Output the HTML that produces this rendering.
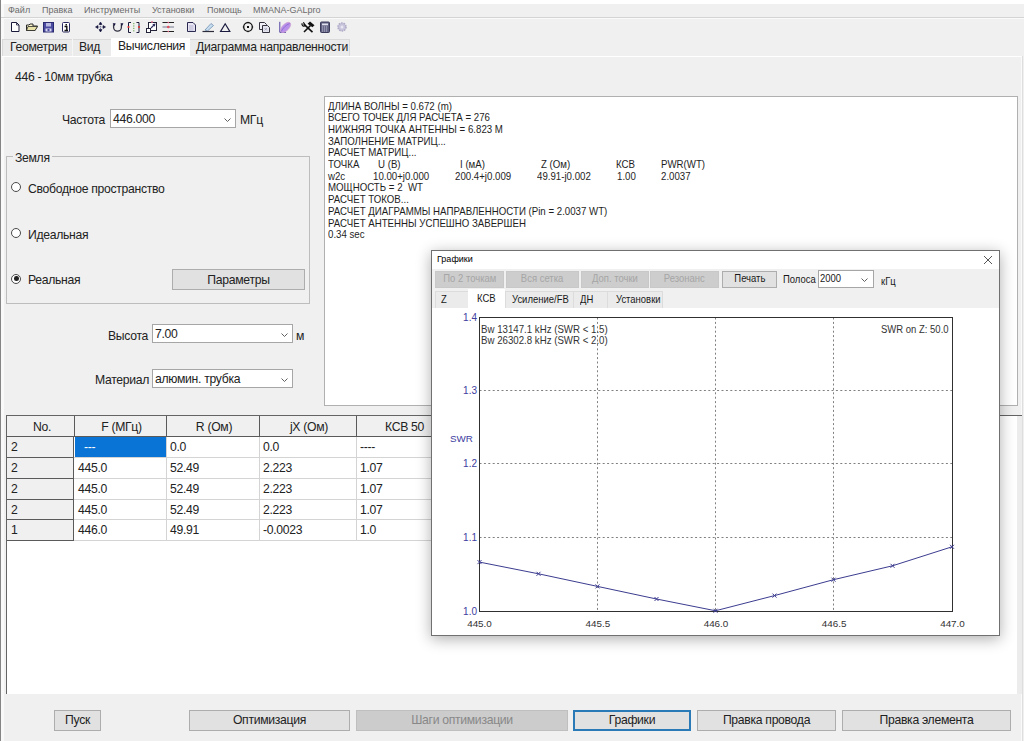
<!DOCTYPE html>
<html><head><meta charset="utf-8">
<style>
*{margin:0;padding:0;box-sizing:border-box}
html,body{width:1024px;height:741px;overflow:hidden;background:#f0f0f0;font-family:"Liberation Sans",sans-serif;color:#222}
.a{position:absolute;white-space:pre}
.ui{font-size:12.2px;letter-spacing:-0.3px}
.menu{font-size:9px;color:#6c6c6c}
.memo{font-size:10.3px;line-height:11.7px;color:#1e1e1e;transform:scaleX(.94);transform-origin:0 0}
.box{position:absolute;background:#fff;border:1px solid #a9a9a9}
.btn{position:absolute;background:#e1e1e1;border:1px solid #adadad;font-size:12.2px;letter-spacing:-0.3px;text-align:center;color:#222}
.combo{position:absolute;background:#fff;border:1px solid #a6a6a6;font-size:12.2px;letter-spacing:-0.3px}
.combo .t{position:absolute;left:2px;top:1.5px}
.chev{position:absolute;right:4px;top:7.5px;width:7px;height:4px}
.radio{position:absolute;width:10px;height:10px;border:1px solid #4a4a4a;border-radius:50%;background:#fff}
</style></head><body>
<!-- window left border -->
<div class="a" style="left:0;top:0;width:1px;height:741px;background:#858585"></div>
<div class="a" style="left:1px;top:0;width:3px;height:741px;background:#f9f9f9"></div>
<div class="a" style="left:1px;top:0;width:1023px;height:4px;background:#fff"></div>
<div class="a" style="left:1px;top:17px;width:1023px;height:1px;background:#d4d4d4"></div>
<div class="a" style="left:1px;top:18px;width:1023px;height:1px;background:#fafafa"></div>
<div class="a" style="left:2px;top:56px;width:1020px;height:1px;background:#fff"></div>
<div class="a" style="left:1021px;top:56px;width:1px;height:685px;background:#fafafa"></div>
<div class="a" style="left:1022px;top:56px;width:1px;height:685px;background:#dedede"></div>
<!-- menu -->
<div class="a menu" style="left:8px;top:5px">Файл</div>
<div class="a menu" style="left:42px;top:5px">Правка</div>
<div class="a menu" style="left:84px;top:5px">Инструменты</div>
<div class="a menu" style="left:152px;top:5px">Установки</div>
<div class="a menu" style="left:207px;top:5px">Помощь</div>
<div class="a menu" style="left:253px;top:5px">MMANA-GALpro</div>
<svg class="a" style="left:0;top:17px" width="360" height="20" viewBox="0 17 360 20">
<!-- new doc -->
<path d="M11.5 22.5H16.5L19 25V31.5H11.5Z" fill="#fff" stroke="#1a1a3a" stroke-width="1"/>
<path d="M16.5 22.5V25H19" fill="none" stroke="#1a1a3a" stroke-width="0.8"/>
<!-- open folder -->
<path d="M26.5 30.5V25H29L30 24H33V26H37.5L35 30.5Z" fill="#f6f1c8" stroke="#2a2a2a" stroke-width="1"/>
<path d="M28 26.5H37.5L35 30.5H26.5Z" fill="#e8e2a8" stroke="#2a2a2a" stroke-width=".8"/>
<!-- save -->
<rect x="43.5" y="22.5" width="10" height="9.5" fill="#4a4aa0" stroke="#2a2a70"/>
<rect x="46" y="23" width="5" height="3.5" fill="#b8b8e0"/>
<rect x="45.5" y="28.5" width="6" height="3" fill="#d8d8f0"/>
<rect x="47.5" y="29" width="2" height="2" fill="#4a4aa0"/>
<!-- info -->
<rect x="62.5" y="22.5" width="7" height="9.5" rx="1" fill="#fff" stroke="#2a2a60"/>
<rect x="65.5" y="24" width="1.5" height="1.5" fill="#111"/>
<path d="M64.5 26.5H66.8V30.2M64.5 30.5H68" stroke="#111" stroke-width="1.4" fill="none"/>
<!-- move -->
<path d="M100.5 24V30M97.5 27H103.5" stroke="#6a6a90" stroke-width=".9" stroke-dasharray="1.2 .8"/>
<path d="M100.5 22L99 24.4H102ZM100.5 32L99 29.6H102ZM95.5 27L97.9 25.5V28.5ZM105.5 27L103.1 25.5V28.5Z" fill="#10103a" stroke="#10103a" stroke-width=".6" stroke-linejoin="round"/>
<!-- rotate -->
<path d="M113.6 24.3V27.2A3.9 3.9 0 0 0 121.4 27.2V24.3" fill="none" stroke="#333344" stroke-width="1.3"/>
<path d="M112.6 23.2H115.6L114.8 26ZM120.4 23.2H123.4L122 26Z" fill="#10103a"/>
<!-- brackets -->
<path d="M131 22.5H128.5V32.5H131M136.5 22.5H139V32.5H136.5" fill="none" stroke="#1a1a3a" stroke-width="1"/>
<path d="M133.8 23V32" stroke="#5aa040" stroke-width="1" stroke-dasharray="1.2 1.2"/>
<circle cx="128.5" cy="27" r="1.1" fill="#e03030"/><circle cx="139" cy="27" r="1.1" fill="#e03030"/>
<!-- resize -->
<rect x="148.5" y="22.5" width="8" height="8" fill="#fff" stroke="#222238"/>
<rect x="146.5" y="28.5" width="4" height="4" fill="#fff" stroke="#222238"/>
<path d="M151 28L154.5 24.5" stroke="#303060" stroke-width="1.1"/>
<path d="M155.5 23.5L152.3 24.2L154.8 26.7Z" fill="#303060"/>
<circle cx="152" cy="22" r=".9" fill="#e07090"/>
<!-- lines -->
<path d="M162.5 22.5H174M162.5 31.5H174" stroke="#222" stroke-width="1"/>
<path d="M162.5 27H174" stroke="#8a8aa0" stroke-width="1.2"/>
<circle cx="168.3" cy="27" r="1.3" fill="#e05060"/>
<circle cx="168.3" cy="22.5" r=".8" fill="#e06080"/><circle cx="168.3" cy="31.5" r=".8" fill="#e06080"/>
<!-- doc with lines -->
<path d="M187.5 22.5H193L195.5 25V31.5H187.5Z" fill="#e8e4f4" stroke="#2a2a50" stroke-width="1"/>
<path d="M189 26H193.5M189 28H193.5M189 30H193.5" stroke="#a8a8c8" stroke-width=".8"/>
<!-- eraser -->
<path d="M205 30L211 23.5L213.5 25.5L207.5 31Z" fill="#c8dcf0" stroke="#7090b0" stroke-width=".8"/>
<path d="M202.5 31.5H214" stroke="#2a2a3a" stroke-width="1.2"/>
<!-- triangle -->
<path d="M225.2 23.8L220.6 31.5H229.8Z" fill="none" stroke="#1a1a40" stroke-width="1.2"/>
<!-- target -->
<circle cx="248" cy="27" r="4.3" fill="none" stroke="#111" stroke-width="1.3"/>
<rect x="247" y="26" width="2" height="2" fill="#111"/>
<path d="M248 21.8V23M248 31V32.2M242.8 27H244M252 27H253.2" stroke="#111" stroke-width="1"/>
<!-- copy -->
<path d="M259.5 22.5H264.5L266.5 24.5V29.5H259.5Z" fill="#f0f0f6" stroke="#333340"/>
<path d="M262.5 25.5H267.5L269.5 27.5V32.5H262.5Z" fill="#e4e4ee" stroke="#333340"/>
<path d="M264.5 28L267 30.5M267 28L264.5 30.5" stroke="#a0a0b8" stroke-width=".8"/>
<!-- lobe -->
<path d="M279.8 21.8V32.3H286" stroke="#5040a0" stroke-width="1" fill="none"/>
<ellipse cx="285.6" cy="27.4" rx="6.4" ry="3.3" transform="rotate(-45 285.6 27.4)" fill="#b890ec" stroke="#d0a0d0" stroke-width=".7"/>
<path d="M281 31.5C283 28 286 25 289.5 23.5" stroke="#9070d0" stroke-width="1" fill="none"/>
<!-- tools -->
<path d="M303.8 24.2L312.5 32.2" stroke="#111" stroke-width="1.6"/>
<path d="M302.2 23.2A2 2 0 0 0 305.3 25.6M305.3 25.6L303.4 22.2" stroke="#111" stroke-width="1.2" fill="none"/>
<path d="M304 32L310.5 25.5" stroke="#111" stroke-width="1.6"/>
<path d="M307.6 23.8L310 21.4L314.5 25.2L312.4 27.3Z" fill="#111"/>
<!-- calc -->
<rect x="320.5" y="22" width="9" height="10.5" rx="1" fill="#606080" stroke="#3a3a5a"/>
<rect x="322" y="23.5" width="6" height="1.8" fill="#e0e0f0"/>
<path d="M322 27H328M322 29H328M322 31H328" stroke="#d0d0e8" stroke-width=".9" stroke-dasharray="1.2 .8"/>
<!-- gear -->
<circle cx="342" cy="27" r="4" fill="#c8c4dc" stroke="#b0acc8" stroke-width="1.6" stroke-dasharray="1.5 1"/>
<circle cx="342" cy="27" r="1.5" fill="#e8e6f0"/>
</svg>
<!-- tabs -->
<div class="a" style="left:2px;top:39px;width:348px;height:17px;background:#ebebeb;border:1px solid #dadada;border-bottom:none"></div>
<div class="a" style="left:72px;top:39px;width:1px;height:17px;background:#f6f6f6"></div>
<div class="a" style="left:111px;top:38px;width:79px;height:19px;background:#fff"></div>
<div class="a ui" style="left:10px;top:40px">Геометрия</div>
<div class="a ui" style="left:79px;top:40px">Вид</div>
<div class="a ui" style="left:118px;top:38.5px">Вычисления</div>
<div class="a ui" style="left:196px;top:40px">Диаграмма направленности</div>
<div class="a ui" style="left:15px;top:69.5px">446 - 10мм трубка</div>

<!-- left controls -->
<div class="a ui" style="left:62px;top:113.3px">Частота</div>
<div class="combo" style="left:110px;top:109px;width:126px;height:19px"><span class="t">446.000</span><svg class="chev" width="7" height="4"><path d="M.5 .5L3.5 3.5L6.5 .5" fill="none" stroke="#606060"/></svg></div>
<div class="a ui" style="left:240px;top:113.3px">МГц</div>

<div class="a" style="left:6px;top:156px;width:304px;height:148px;border:1px solid #bdbdbd"></div>
<div class="a ui" style="left:13px;top:151px;padding:0 2px;background:#f0f0f0">Земля</div>
<div class="radio" style="left:11.4px;top:182.2px"></div>
<div class="a ui" style="left:28px;top:181.5px">Свободное пространство</div>
<div class="radio" style="left:11.4px;top:227.9px"></div>
<div class="a ui" style="left:28px;top:227.5px">Идеальная</div>
<div class="radio" style="left:11.4px;top:273.7px"></div>
<div class="a" style="left:14.1px;top:276.4px;width:4.6px;height:4.6px;border-radius:50%;background:#222"></div>
<div class="a ui" style="left:28px;top:272.8px">Реальная</div>
<div class="btn" style="left:172px;top:269px;width:133px;height:21px;line-height:21px">Параметры</div>

<div class="a ui" style="left:108px;top:329.3px">Высота</div>
<div class="combo" style="left:152px;top:324px;width:141px;height:19px"><span class="t">7.00</span><svg class="chev" width="7" height="4"><path d="M.5 .5L3.5 3.5L6.5 .5" fill="none" stroke="#606060"/></svg></div>
<div class="a ui" style="left:296px;top:329.3px">м</div>
<div class="a ui" style="left:95px;top:373px">Материал</div>
<div class="combo" style="left:152px;top:369px;width:141px;height:19px"><span class="t">алюмин. трубка</span><svg class="chev" width="7" height="4"><path d="M.5 .5L3.5 3.5L6.5 .5" fill="none" stroke="#606060"/></svg></div>

<!-- memo -->
<div class="box" style="left:324px;top:96px;width:694px;height:310px;border-color:#b0b0b0"></div>
<div class="a memo" style="left:328px;top:100.5px">ДЛИНА ВОЛНЫ = 0.672 (m)
ВСЕГО ТОЧЕК ДЛЯ РАСЧЕТА = 276
НИЖНЯЯ ТОЧКА АНТЕННЫ = 6.823 M
ЗАПОЛНЕНИЕ МАТРИЦ...
РАСЧЕТ МАТРИЦ...


МОЩНОСТЬ = 2  WT
РАСЧЕТ ТОКОВ...
РАСЧЕТ ДИАГРАММЫ НАПРАВЛЕННОСТИ (Pin = 2.0037 WT)
РАСЧЕТ АНТЕННЫ УСПЕШНО ЗАВЕРШЕН
0.34 sec</div>
<div class="a memo" style="left:328px;top:159.1px">ТОЧКА</div>
<div class="a memo" style="left:378px;top:159.1px">U (B)</div>
<div class="a memo" style="left:460px;top:159.1px">I (мА)</div>
<div class="a memo" style="left:541px;top:159.1px">Z (Ом)</div>
<div class="a memo" style="left:616px;top:159.1px">КСВ</div>
<div class="a memo" style="left:661px;top:159.1px">PWR(WT)</div>
<div class="a memo" style="left:328px;top:170.8px">w2c</div>
<div class="a memo" style="left:373px;top:170.8px">10.00+j0.000</div>
<div class="a memo" style="left:455px;top:170.8px">200.4+j0.009</div>
<div class="a memo" style="left:537px;top:170.8px">49.91-j0.002</div>
<div class="a memo" style="left:617px;top:170.8px">1.00</div>
<div class="a memo" style="left:661px;top:170.8px">2.0037</div>

<!-- table -->
<div class="a" style="left:6px;top:415px;width:1016px;height:279px;background:#fff;border-left:1px solid #646464;border-top:1px solid #646464"></div>
<div class="a" style="left:1017px;top:416px;width:5px;height:278px;background:#ececec"></div>
<div class="a" style="left:7px;top:416px;width:443px;height:20px;background:#f0f0f0"></div>
<div class="a" style="left:7px;top:436px;width:67px;height:104px;background:#f0f0f0"></div>
<div class="a" style="left:75px;top:437px;width:91px;height:20px;background:#0a74d6"></div>
<div class="a" style="left:74px;top:457px;width:376px;height:1px;background:#d4d4d4"></div>
<div class="a" style="left:74px;top:478px;width:376px;height:1px;background:#d4d4d4"></div>
<div class="a" style="left:74px;top:499px;width:376px;height:1px;background:#d4d4d4"></div>
<div class="a" style="left:74px;top:519px;width:376px;height:1px;background:#d4d4d4"></div>
<div class="a" style="left:74px;top:540px;width:376px;height:1px;background:#d4d4d4"></div>
<div class="a" style="left:166px;top:436px;width:1px;height:104px;background:#d4d4d4"></div>
<div class="a" style="left:259px;top:436px;width:1px;height:104px;background:#d4d4d4"></div>
<div class="a" style="left:356px;top:436px;width:1px;height:104px;background:#d4d4d4"></div>
<div class="a" style="left:7px;top:436px;width:443px;height:1px;background:#5a5a5a"></div>
<div class="a" style="left:74px;top:416px;width:1px;height:20px;background:#5a5a5a"></div>
<div class="a" style="left:166px;top:416px;width:1px;height:20px;background:#5a5a5a"></div>
<div class="a" style="left:259px;top:416px;width:1px;height:20px;background:#5a5a5a"></div>
<div class="a" style="left:356px;top:416px;width:1px;height:20px;background:#5a5a5a"></div>
<div class="a" style="left:73px;top:436px;width:1px;height:104px;background:#5a5a5a"></div>
<div class="a" style="left:7px;top:457px;width:67px;height:1px;background:#5a5a5a"></div>
<div class="a" style="left:7px;top:478px;width:67px;height:1px;background:#5a5a5a"></div>
<div class="a" style="left:7px;top:499px;width:67px;height:1px;background:#5a5a5a"></div>
<div class="a" style="left:7px;top:519px;width:67px;height:1px;background:#5a5a5a"></div>
<div class="a" style="left:7px;top:540px;width:67px;height:1px;background:#5a5a5a"></div>
<div class="a ui" style="left:8.5px;top:420px;width:67px;text-align:center">No.</div>
<div class="a ui" style="left:75.5px;top:420px;width:92px;text-align:center">F (МГц)</div>
<div class="a ui" style="left:167.5px;top:420px;width:93px;text-align:center">R (Ом)</div>
<div class="a ui" style="left:260.5px;top:420px;width:97px;text-align:center">jX (Ом)</div>
<div class="a ui" style="left:385px;top:420px">КСВ 50</div>
<div class="a ui" style="left:11px;top:440px;">2</div>
<div class="a ui" style="left:84px;top:440px;color:#fff;">---</div>
<div class="a ui" style="left:170px;top:440px;">0.0</div>
<div class="a ui" style="left:263px;top:440px;">0.0</div>
<div class="a ui" style="left:360px;top:440px;">----</div>
<div class="a ui" style="left:11px;top:461px;">2</div>
<div class="a ui" style="left:78px;top:461px;">445.0</div>
<div class="a ui" style="left:170px;top:461px;">52.49</div>
<div class="a ui" style="left:263px;top:461px;">2.223</div>
<div class="a ui" style="left:360px;top:461px;">1.07</div>
<div class="a ui" style="left:11px;top:482px;">2</div>
<div class="a ui" style="left:78px;top:482px;">445.0</div>
<div class="a ui" style="left:170px;top:482px;">52.49</div>
<div class="a ui" style="left:263px;top:482px;">2.223</div>
<div class="a ui" style="left:360px;top:482px;">1.07</div>
<div class="a ui" style="left:11px;top:503px;">2</div>
<div class="a ui" style="left:78px;top:503px;">445.0</div>
<div class="a ui" style="left:170px;top:503px;">52.49</div>
<div class="a ui" style="left:263px;top:503px;">2.223</div>
<div class="a ui" style="left:360px;top:503px;">1.07</div>
<div class="a ui" style="left:11px;top:523px;">1</div>
<div class="a ui" style="left:78px;top:523px;">446.0</div>
<div class="a ui" style="left:170px;top:523px;">49.91</div>
<div class="a ui" style="left:263px;top:523px;">-0.0023</div>
<div class="a ui" style="left:360px;top:523px;">1.0</div>

<!-- dialog -->
<div class="a" style="left:431px;top:250px;width:569px;height:386px;background:#fff;border:1px solid #707070;box-shadow:0 3px 14px rgba(0,0,0,.32)"></div>
<div class="a" style="left:432px;top:269px;width:567px;height:39px;background:#f0f0f0"></div>
<div class="a" style="left:437px;top:254.98px;font-size:9px;line-height:9px;color:#000;">Графики</div>
<svg class="a" style="left:982px;top:254px" width="12" height="12"><path d="M2 2L10 10M10 2L2 10" stroke="#444" stroke-width="0.9"/></svg>
<div class="a" style="left:435px;top:271px;width:69px;height:17px;background:#cdcdcd;border:1px solid #c8c8c8"></div>
<div class="a" style="left:409.5px;top:274.38px;width:120px;text-align:center;font-size:10.3px;line-height:10.3px;color:#a6a6a6"><span style="display:inline-block;transform:scaleX(0.92)">По 2 точкам</span></div>
<div class="a" style="left:506px;top:271px;width:73px;height:17px;background:#cdcdcd;border:1px solid #c8c8c8"></div>
<div class="a" style="left:482.5px;top:274.38px;width:120px;text-align:center;font-size:10.3px;line-height:10.3px;color:#a6a6a6"><span style="display:inline-block;transform:scaleX(0.92)">Вся сетка</span></div>
<div class="a" style="left:581px;top:271px;width:68px;height:17px;background:#cdcdcd;border:1px solid #c8c8c8"></div>
<div class="a" style="left:555.0px;top:274.38px;width:120px;text-align:center;font-size:10.3px;line-height:10.3px;color:#a6a6a6"><span style="display:inline-block;transform:scaleX(0.92)">Доп. точки</span></div>
<div class="a" style="left:650px;top:271px;width:69px;height:17px;background:#cdcdcd;border:1px solid #c8c8c8"></div>
<div class="a" style="left:624.5px;top:274.38px;width:120px;text-align:center;font-size:10.3px;line-height:10.3px;color:#a6a6a6"><span style="display:inline-block;transform:scaleX(0.92)">Резонанс</span></div>
<div class="a" style="left:722px;top:271px;width:55px;height:17px;background:#e1e1e1;border:1px solid #adadad"></div>
<div class="a" style="left:689.5px;top:274.38px;width:120px;text-align:center;font-size:10.3px;line-height:10.3px;color:#1a1a1a"><span style="display:inline-block;transform:scaleX(0.92)">Печать</span></div>
<div class="a" style="left:783px;top:274.88px;font-size:10.3px;line-height:10.3px;color:#1a1a1a;transform:scaleX(0.92);transform-origin:0 0;">Полоса</div>
<div class="a" style="left:818px;top:270px;width:56px;height:18px;background:#fff;border:1px solid #a6a6a6"><svg class="chev" style="right:5px;top:7px" width="7" height="4"><path d="M.5 .5L3.5 3.5L6.5 .5" fill="none" stroke="#606060"/></svg></div>
<div class="a" style="left:820px;top:274.38px;font-size:10.3px;line-height:10.3px;color:#1a1a1a;transform:scaleX(0.92);transform-origin:0 0;">2000</div>
<div class="a" style="left:881px;top:276.58px;font-size:10.3px;line-height:10.3px;color:#1a1a1a;transform:scaleX(0.92);transform-origin:0 0;">кГц</div>
<div class="a" style="left:435px;top:291px;width:228px;height:17px;background:#ebebeb;border:1px solid #dcdcdc;border-bottom:none"></div>
<div class="a" style="left:505px;top:291px;width:1px;height:17px;background:#dcdcdc"></div>
<div class="a" style="left:573px;top:291px;width:1px;height:17px;background:#dcdcdc"></div>
<div class="a" style="left:607px;top:291px;width:1px;height:17px;background:#dcdcdc"></div>
<div class="a" style="left:468px;top:289px;width:37px;height:19px;background:#fff"></div>
<div class="a" style="left:440.5px;top:295.28px;font-size:10.3px;line-height:10.3px;color:#1a1a1a;transform:scaleX(0.92);transform-origin:0 0;">Z</div>
<div class="a" style="left:476.5px;top:293.68px;font-size:10.3px;line-height:10.3px;color:#1a1a1a;transform:scaleX(0.92);transform-origin:0 0;">КСВ</div>
<div class="a" style="left:511.5px;top:295.28px;font-size:10.3px;line-height:10.3px;color:#1a1a1a;transform:scaleX(0.92);transform-origin:0 0;">Усиление/FB</div>
<div class="a" style="left:580px;top:295.28px;font-size:10.3px;line-height:10.3px;color:#1a1a1a;transform:scaleX(0.92);transform-origin:0 0;">ДН</div>
<div class="a" style="left:615.5px;top:295.28px;font-size:10.3px;line-height:10.3px;color:#1a1a1a;transform:scaleX(0.92);transform-origin:0 0;">Установки</div>
<svg class="a" style="left:0;top:0" width="1024" height="741">
<line x1="597.5" y1="317.5" x2="597.5" y2="611.5" stroke="#808080" stroke-dasharray="2 2.4"/>
<line x1="715.5" y1="317.5" x2="715.5" y2="611.5" stroke="#808080" stroke-dasharray="2 2.4"/>
<line x1="833.5" y1="317.5" x2="833.5" y2="611.5" stroke="#808080" stroke-dasharray="2 2.4"/>
<line x1="479.5" y1="537.5" x2="952.5" y2="537.5" stroke="#808080" stroke-dasharray="2 2.4"/>
<line x1="479.5" y1="463.5" x2="952.5" y2="463.5" stroke="#808080" stroke-dasharray="2 2.4"/>
<line x1="479.5" y1="390.5" x2="952.5" y2="390.5" stroke="#808080" stroke-dasharray="2 2.4"/>
<rect x="479.5" y="317.5" width="473.0" height="294.0" fill="none" stroke="#303030"/>
<polyline fill="none" stroke="#3c3c90" stroke-width="1" points="479.5,562.1 538.5,573.8 597.5,586.4 656.5,599 715.5,610.75 774.5,595.6 833.5,579.7 892.5,565.8 952,546.8"/>
<path d="M477.5 560.1L481.5 564.1M481.5 560.1L477.5 564.1" stroke="#3c3c90" stroke-width="1"/>
<path d="M536.5 571.8L540.5 575.8M540.5 571.8L536.5 575.8" stroke="#3c3c90" stroke-width="1"/>
<path d="M595.5 584.4L599.5 588.4M599.5 584.4L595.5 588.4" stroke="#3c3c90" stroke-width="1"/>
<path d="M654.5 597L658.5 601M658.5 597L654.5 601" stroke="#3c3c90" stroke-width="1"/>
<path d="M713.5 608.75L717.5 612.75M717.5 608.75L713.5 612.75" stroke="#3c3c90" stroke-width="1"/>
<path d="M772.5 593.6L776.5 597.6M776.5 593.6L772.5 597.6" stroke="#3c3c90" stroke-width="1"/>
<path d="M831.5 577.7L835.5 581.7M835.5 577.7L831.5 581.7" stroke="#3c3c90" stroke-width="1"/>
<path d="M890.5 563.8L894.5 567.8M894.5 563.8L890.5 567.8" stroke="#3c3c90" stroke-width="1"/>
<path d="M950 544.8L954 548.8M954 544.8L950 548.8" stroke="#3c3c90" stroke-width="1"/>
</svg>
<div class="a" style="left:437px;top:607.37px;width:40px;text-align:right;font-size:10px;line-height:9.6px;color:#4040a0">1.0</div>
<div class="a" style="left:437px;top:533.37px;width:40px;text-align:right;font-size:10px;line-height:9.6px;color:#4040a0">1.1</div>
<div class="a" style="left:437px;top:459.37px;width:40px;text-align:right;font-size:10px;line-height:9.6px;color:#4040a0">1.2</div>
<div class="a" style="left:437px;top:386.37px;width:40px;text-align:right;font-size:10px;line-height:9.6px;color:#4040a0">1.3</div>
<div class="a" style="left:437px;top:313.37px;width:40px;text-align:right;font-size:10px;line-height:9.6px;color:#4040a0">1.4</div>
<div class="a" style="left:450px;top:433.70px;font-size:9.8px;line-height:9.8px;color:#4040a0;">SWR</div>
<div class="a" style="left:459.5px;top:619.26px;width:40px;text-align:center;font-size:9.9px;line-height:9.5px;color:#333">445.0</div>
<div class="a" style="left:577.8px;top:619.26px;width:40px;text-align:center;font-size:9.9px;line-height:9.5px;color:#333">445.5</div>
<div class="a" style="left:696.0px;top:619.26px;width:40px;text-align:center;font-size:9.9px;line-height:9.5px;color:#333">446.0</div>
<div class="a" style="left:814.2px;top:619.26px;width:40px;text-align:center;font-size:9.9px;line-height:9.5px;color:#333">446.5</div>
<div class="a" style="left:932.5px;top:619.26px;width:40px;text-align:center;font-size:9.9px;line-height:9.5px;color:#333">447.0</div>
<div class="a" style="left:481px;top:324.68px;font-size:10.3px;line-height:10.3px;color:#333;transform:scaleX(0.94);transform-origin:0 0;">Bw 13147.1 kHz (SWR &lt; 1.5)</div>
<div class="a" style="left:481px;top:335.88px;font-size:10.3px;line-height:10.3px;color:#333;transform:scaleX(0.94);transform-origin:0 0;">Bw 26302.8 kHz (SWR &lt; 2.0)</div>
<div class="a" style="left:881px;top:324.74px;font-size:10px;line-height:10px;color:#333;transform:scaleX(0.95);transform-origin:0 0;">SWR on Z: 50.0</div>
<!-- bottom buttons -->
<div class="btn" style="left:54px;top:710px;width:47px;height:21px;line-height:19px">Пуск</div>
<div class="btn" style="left:189px;top:710px;width:161px;height:21px;line-height:19px">Оптимизация</div>
<div class="btn" style="left:356px;top:710px;width:212px;height:21px;line-height:19px;background:#cccccc;border-color:#bfbfbf;color:#888">Шаги оптимизации</div>
<div class="btn" style="left:573px;top:710px;width:118px;height:21px;line-height:17px;border:2px solid #2a7ab8">Графики</div>
<div class="btn" style="left:697px;top:710px;width:139px;height:21px;line-height:19px">Правка провода</div>
<div class="btn" style="left:842px;top:710px;width:169px;height:21px;line-height:19px">Правка элемента</div>

</body></html>
